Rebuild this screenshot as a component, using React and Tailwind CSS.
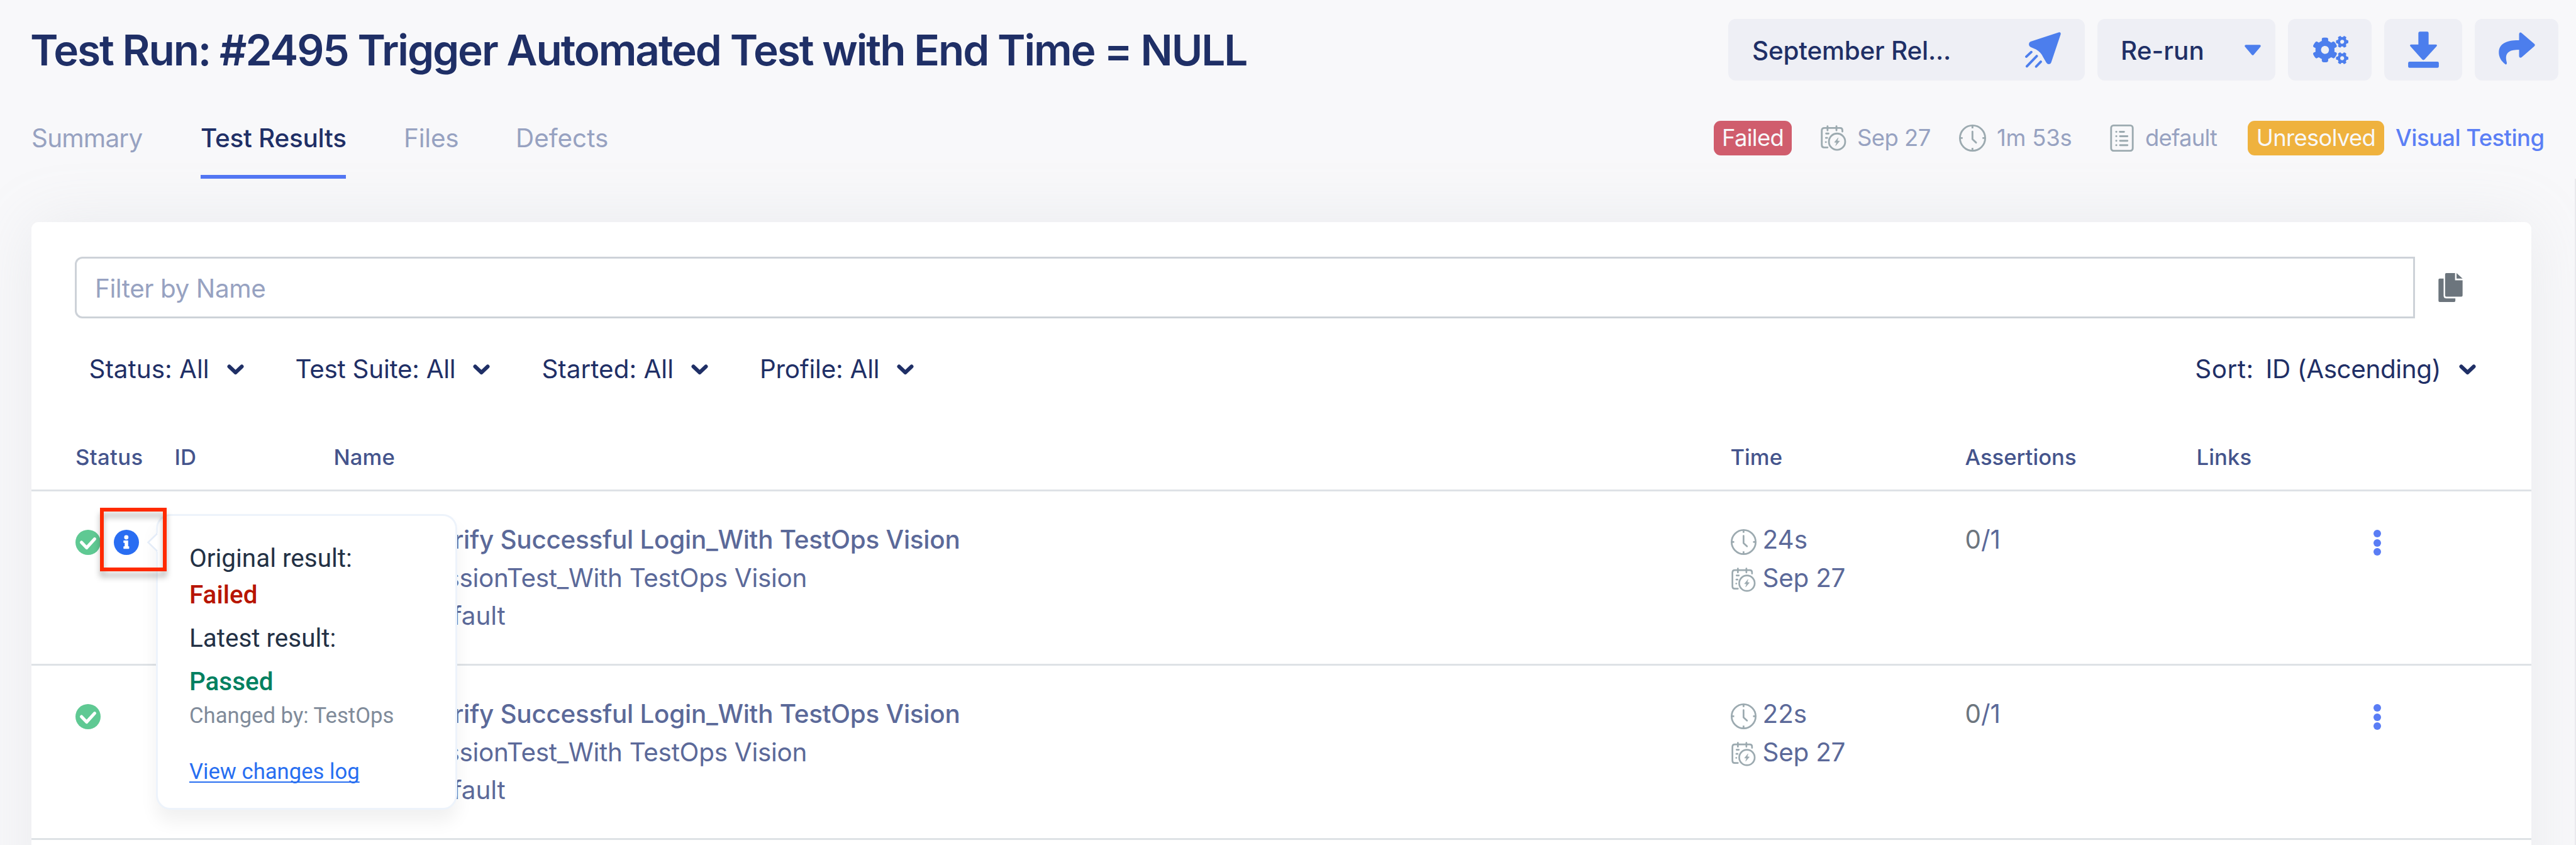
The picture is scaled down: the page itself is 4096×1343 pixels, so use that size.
import React from "react";
import { FaCogs } from "react-icons/fa";

const PlaneIcon = () => (
  <svg viewBox="1032 95 178 178" className="h-[57px] w-[57px] shrink-0 text-[#4c7eed]">
    <path
      fill="currentColor"
      d="M1201 96 L1060 142 Q1051 146 1051 157 Q1051 165 1059 169 L1086 181 Q1112 196 1122 220 L1137 246 Q1141 254 1149 254 Q1159 254 1162 245 L1209 105 Q1210 95 1201 96 Z"
    />
    <path
      fill="none"
      stroke="currentColor"
      strokeWidth="12"
      strokeLinecap="round"
      d="M1038 217 L1063 194 M1041 265 L1090 214 M1087 266 L1110 242"
    />
  </svg>
);

const DownloadIcon = () => (
  <svg viewBox="738 95 153 182" className="h-[58px] w-[49px] text-[#4c7eed]" fill="currentColor">
    <path d="M797 96 H833 Q840 96 840 103 V160 H877 Q885 162 880 169 L820 235 Q814 240 808 235 L749 169 Q744 162 752 160 H789 V103 Q789 96 797 96 Z" />
    <rect x="738" y="246" width="153" height="30" rx="7" />
  </svg>
);

const ShareIcon = () => (
  <svg viewBox="1187 99 182 162" className="h-[52px] w-[58px] text-[#4c7eed]" fill="currentColor">
    <path d="M1221 259 C1198 243 1187 221 1188 197 C1190 156 1226 138 1289 139 V107 Q1292 97 1301 102 L1366 158 Q1370 163 1366 168 L1301 225 Q1291 230 1289 219 V186 C1236 186 1214 203 1228 252 Q1228 262 1221 259 Z" />
  </svg>
);

const CalendarIcon = ({ className }) => (
  <svg viewBox="20 555 129 130" className={className} fill="none" stroke="#9caab0" strokeWidth="9" strokeLinecap="round" strokeLinejoin="round">
    <path d="M54 667 H37 Q25 667 25 655 V582 Q25 569 38 569 H117 Q129 569 129 581 V587" />
    <path d="M54 560 V581 M99 560 V581 M47 597 H59 M46 619 H52 M45 640 H46" />
    <circle cx="102" cy="638" r="41" />
    <path d="M107 619 L89 641 L100 642 L95 658 L115 635 L104 634 Z" fill="#9caab0" stroke="#9caab0" strokeWidth="2" />
  </svg>
);

const ClockIcon = ({ className }) => (
  <svg viewBox="705 555 135 135" className={className} fill="none" stroke="#9caab0" strokeWidth="9" strokeLinejoin="round">
    <circle cx="772.5" cy="622.5" r="63" />
    <path d="M772 559 V574 M772 671 V686 M709 622 H723 M822 622 H836" />
    <path strokeLinecap="round" d="M772 590 V628 L790 645" />
  </svg>
);

const ListIcon = () => (
  <svg viewBox="1452 555 117 135" className="h-[43px] w-[38px]" fill="none" stroke="#9caab0" strokeWidth="9" strokeLinecap="round">
    <rect x="1456.500" y="559.500" width="108" height="126" rx="12" />
    <path d="M1482 591 H1483 M1482 613 H1483 M1482 636 H1483 M1482 658 H1483 M1500 591 H1521 M1501 613 H1538 M1501 636 H1538 M1501 658 H1538" />
  </svg>
);

const CheckIcon = () => (
  <svg viewBox="42 162 126 126" className="h-[40px] w-[40px]">
    <circle cx="105" cy="225" r="63" fill="#5fc993" />
    <path d="M72 225 L98 252 L138 208" fill="none" stroke="#fff" strokeWidth="16" strokeLinecap="round" strokeLinejoin="round" />
  </svg>
);

const InfoIcon = () => (
  <svg viewBox="233 162 123 123" className="h-[40px] w-[40px]">
    <circle cx="294.500" cy="223.500" r="61.500" fill="#296df2" />
    <circle cx="294" cy="199" r="10.500" fill="#fff" />
    <path d="M282 214 H303 V243 H306 Q308 243 308 245 V253 Q308 255 306 255 H282 Q280 255 280 253 V245 Q280 243 282 243 H286 V226 H282 Q280 226 280 224 V216 Q280 214 282 214 Z" fill="#fff" />
  </svg>
);

const CopyIcon = () => (
  <svg viewBox="0 0 40 48" className="h-[46px] w-[39px]" fill="#6c757d">
    <path d="M13 0 H27.500 V12 H40 V37 Q40 39 38 39 H13 Q11 39 11 37 V2 Q11 0 13 0 Z" />
    <path d="M30 0 L40 9 H30 Z" />
    <path d="M2 9 H8.500 V38 Q9 42 13 42 H28 V46 Q28 48 26 48 H2 Q0 48 0 46 V11 Q0 9 2 9 Z" />
  </svg>
);

const Chevron = () => (
  <svg viewBox="0 0 27 17" className="h-[17px] w-[27px]" fill="none" stroke="#1f2f66" strokeWidth="6" strokeLinecap="round" strokeLinejoin="round">
    <path d="M3.500 3.500 L13.500 13 L23.500 3.500" />
  </svg>
);

const Tab = ({ children, active, className }) => (
  <div
    className={
      "mt-[62px] border-b-[6px] pb-[28px] leading-[60px] whitespace-nowrap " +
      (active ? "border-[#5276f3] font-medium text-[#1f2f66] " : "border-transparent text-[#97a2c1] ") +
      className
    }
  >
    {children}
  </div>
);

const GRID = "grid grid-cols-[157.5px_253px_2221px_373px_368px_250px_1fr] pl-[70px]";

const Row = ({ time, info, children }) => (
  <div className={GRID + " relative h-[277px] border-b-[3px] border-[#dee2e6] pt-[47px] text-[40.44px] leading-[60.6px] text-[#5b6999]"}>
    <div className="mt-[13.5px] flex items-start gap-[21px]">
      <CheckIcon />
      {info && <InfoIcon />}
    </div>
    <div />
    <div className="pl-[141px] whitespace-nowrap">
      <div className="font-medium tracking-[-0.27px]">Verify Successful Login_With TestOps Vision</div>
      <div className="-ml-[11px] tracking-[-0.28px]">SessionTest_With TestOps Vision</div>
      <div className="tracking-[-0.1px]">default</div>
    </div>
    <div>
      <div className="flex items-center gap-[10px]">
        <ClockIcon className="mt-[6px] h-[41px] w-[41px]" />
        <span>{time}</span>
      </div>
      <div className="flex items-center gap-[10px]">
        <CalendarIcon className="mt-[6px] h-[39px] w-[41px]" />
        <span className="tracking-[-0.24px]">Sep 27</span>
      </div>
    </div>
    <div>
      <span className="text-[#6c757d]">0</span>/1
    </div>
    <div />
    <div className="mt-[14px] ml-[31px] flex flex-col gap-[2.5px]">
      <span className="h-[12px] w-[12px] rounded-full bg-[#5a7df5]" />
      <span className="h-[12px] w-[12px] rounded-full bg-[#5a7df5]" />
      <span className="h-[12px] w-[12px] rounded-full bg-[#5a7df5]" />
    </div>
    {children}
  </div>
);

const Popover = () => (
  <div className="absolute top-[36px] left-[198px] z-10 h-[470px] w-[479px] rounded-[23px] border-[3px] border-[#edf3fb] bg-white pt-[38px] pl-[50px] font-['Roboto',sans-serif] text-[40.44px] leading-[58px] text-[#233145] shadow-[0_19px_28px_rgba(0,0,0,0.06)]">
    <svg viewBox="0 0 20 32" className="absolute top-[26px] left-[-18px] h-[32px] w-[20px]">
      <path d="M17 1 H20 V31 H17 Z" fill="#fff" />
      <path d="M17 2 L2.500 16 L17 30" fill="#fff" stroke="#e4ecf8" strokeWidth="2.500" />
    </svg>
    <div>Original result:</div>
    <div className="font-medium text-[#b71500]">Failed</div>
    <div className="mt-[11px]">Latest result:</div>
    <div className="mt-[11px] font-medium text-[#008060]">Passed</div>
    <div className="text-[34.66px] leading-[50px] text-[#808b9a]">Changed by: TestOps</div>
    <div className="mt-[39px] text-[34.66px] leading-[50px] text-[#276ef1] underline decoration-[2px] underline-offset-[4px] [text-decoration-skip-ink:none]">
      View changes log
    </div>
  </div>
);

const BTN = "flex h-[98px] items-center rounded-[12px] bg-[#eeeff5] text-[40.44px] font-medium text-[#1f2f66]";

export default function App() {
  return (
    <div className="relative h-[1343px] w-[4096px] overflow-hidden bg-[#f8f8fa] font-['Inter',sans-serif] text-[#1f2f66]">
      <header className="flex items-start justify-between pt-[30px] pr-[28px] pl-[48px]">
        <h1 className="text-[67.5px] leading-[100px] font-semibold tracking-[-2.12px] whitespace-nowrap">
          Test Run: #2495 Trigger Automated Test with End Time = NULL
        </h1>
        <div className="flex gap-[20px]">
          <button className={BTN + " w-[567px] justify-between px-[38px]"}>
            <span className="pt-[5px] tracking-[-0.2px]">September Rel...</span>
            <PlaneIcon />
          </button>
          <button className={BTN + " w-[283px] justify-between pr-[22px] pl-[37px]"}>
            <span className="pt-[5px] tracking-[0.1px]">Re-run</span>
            <svg viewBox="0 0 28 17" className="h-[17px] w-[28px]">
              <path d="M3 2 H25 L14 15 Z" fill="#4c7eed" stroke="#4c7eed" strokeWidth="3.500" strokeLinejoin="round" />
            </svg>
          </button>
          <button className={BTN + " w-[133px] justify-center"}>
            <FaCogs className="ml-[3px] h-[45px] w-[56px] text-[#4c7eed]" />
          </button>
          <button className={BTN + " w-[124px] justify-center"}>
            <DownloadIcon />
          </button>
          <button className={BTN + " w-[133px] justify-center pb-[4px]"}>
            <ShareIcon />
          </button>
        </div>
      </header>

      <div className="-mt-[2px] flex h-[225px] items-start justify-between pr-[49px] pl-[50px]">
        <nav className="flex text-[40.44px]">
          <Tab className="mr-[92px] w-[177px] tracking-[-0.8px]">Summary</Tab>
          <Tab active className="mr-[92px] w-[231px] tracking-[-0.25px]">Test Results</Tab>
          <Tab className="mr-[92px] w-[86px] tracking-[-0.18px]">Files</Tab>
          <Tab className="w-[145px]">Defects</Tab>
        </nav>
        <div className="flex h-[182px] items-center text-[36.4px] whitespace-nowrap text-[#97a2c1]">
          <span className="flex h-[55px] w-[124px] items-center justify-center rounded-[11px] bg-[#d05d6d] tracking-[-0.69px] text-[#f8f8fa]">Failed</span>
          <CalendarIcon className="ml-[46px] h-[41px] w-[41px]" />
          <span className="ml-[17px] w-[162px] tracking-[-0.5px]">Sep 27</span>
          <ClockIcon className="h-[43px] w-[43px]" />
          <span className="ml-[17px] w-[180px] tracking-[-0.2px]">1m 53s</span>
          <ListIcon />
          <span className="ml-[18px] w-[163px] tracking-[-0.77px]">default</span>
          <span className="flex h-[55px] w-[217px] items-center justify-center rounded-[11px] bg-[#efb23e] tracking-[-0.67px] text-[#f8f8fa]">Unresolved</span>
          <span className="ml-[18px] w-[238px] font-medium tracking-[-0.53px] text-[#5b7ff5]">Visual Testing</span>
        </div>
      </div>

      <main className="mr-[71px] ml-[50px] h-[1100px] rounded-t-[11px] bg-white pt-[55px] shadow-[0_0_101px_rgba(154,161,171,0.15)]">
        <div className="flex items-center pl-[69px]">
          <div className="flex h-[98px] w-[3721px] items-center rounded-l-[12px] border-[3px] border-[#cdd2d8] pt-[5px] pl-[29px] text-[40.44px] tracking-[-0.42px] text-[#97a2c1]">
            Filter by Name
          </div>
          <div className="ml-[37px]">
            <CopyIcon />
          </div>
        </div>

        <div className="mt-[41px] flex h-[80px] items-center justify-between pr-[88px] pl-[91.5px] text-[40.44px] whitespace-nowrap">
          <div className="flex items-center gap-[82px]">
            <div className="flex items-center gap-7">
              <span>Status: All</span>
              <Chevron />
            </div>
            <div className="flex items-center gap-7">
              <span className="tracking-[-0.27px]">Test Suite: All</span>
              <Chevron />
            </div>
            <div className="flex items-center gap-7">
              <span>Started: All</span>
              <Chevron />
            </div>
            <div className="flex items-center gap-7">
              <span className="tracking-[-0.23px]">Profile: All</span>
              <Chevron />
            </div>
          </div>
          <div className="flex items-center">
            <span className="mr-[19px] tracking-[0.5px]">Sort:</span>
            <span className="mr-[29px] tracking-[-0.39px]">ID (Ascending)</span>
            <Chevron />
          </div>
        </div>

        <div className={GRID + " h-[154px] items-end border-b-[3px] border-[#dee2e6] pb-[27px] text-[34.66px] leading-[50px] font-medium text-[#44548c]"}>
          <div className="tracking-[0.35px]">Status</div>
          <div>ID</div>
          <div className="tracking-[0.1px]">Name</div>
          <div>Time</div>
          <div>Assertions</div>
          <div className="tracking-[0.1px]">Links</div>
          <div />
        </div>

        <Row time="24s" info>
          <Popover />
          <div className="absolute top-[26px] left-[109px] z-20 h-[101px] w-[106px] border-[6px] border-[#ff2a00] drop-shadow-[0_9px_5px_rgba(0,0,0,0.28)]" />
        </Row>
        <Row time="22s" />
      </main>

      <div className="absolute top-[284px] right-0 bottom-0 w-[2px] bg-[#eaeaed]" />
    </div>
  );
}
